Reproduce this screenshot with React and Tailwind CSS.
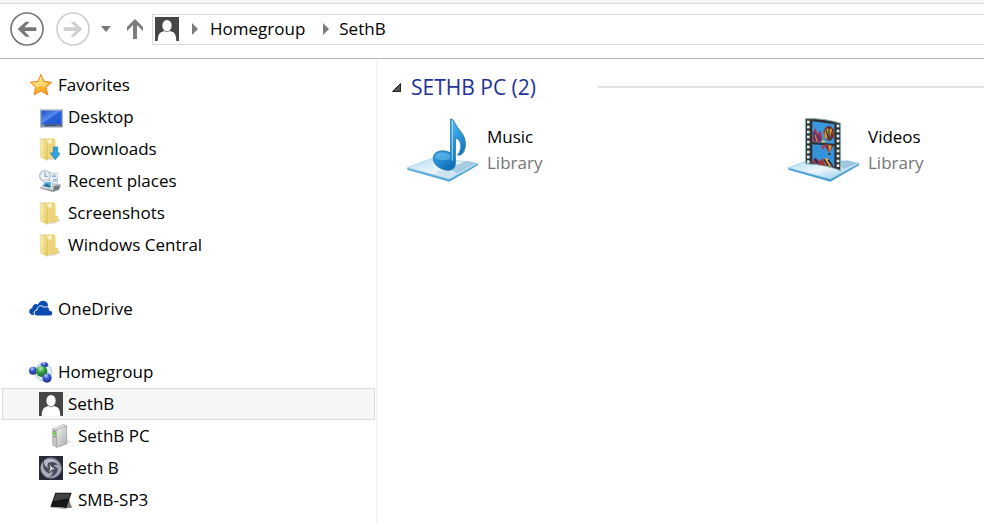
import React from "react";

function PersonIcon() {
  return (
    <svg viewBox="0 0 72 72" className="h-6 w-6 shrink-0" aria-hidden="true">
      <rect width="72" height="72" fill="#464646" />
      <path d="M8 72C9 58 11 50 18 46C24 43 29 43 30 39H42C43 43 49 43 55 46C61 50 63 58 64 72Z" fill="#fff" />
      <ellipse cx="36" cy="26" rx="15" ry="18" fill="#fff" stroke="#464646" strokeWidth="2" />
    </svg>
  );
}

function StarIcon() {
  return (
    <svg viewBox="0 0 72 72" className="h-6 w-6 shrink-0" aria-hidden="true">
      <defs>
        <linearGradient id="star" x1="0" y1="0" x2="0.6" y2="1">
          <stop offset="0" stopColor="#ffe89a" />
          <stop offset="0.5" stopColor="#ffc83c" />
          <stop offset="1" stopColor="#f79a1c" />
        </linearGradient>
      </defs>
      <path d="M36 4L45 25L68 28L51 43L57 66L36 54L15 66L20 43L4 28L27 25Z" fill="url(#star)" stroke="#e8892b" strokeWidth="3" strokeLinejoin="round" />
      <path d="M36 12L42 28L58 31L45 42L36 38L24 43L14 31L30 28Z" fill="#fff3b8" opacity="0.5" />
    </svg>
  );
}

function DesktopIcon() {
  return (
    <svg viewBox="0 0 72 72" className="h-6 w-6 shrink-0" aria-hidden="true">
      <defs>
        <linearGradient id="screen" x1="0" y1="0" x2="1" y2="1">
          <stop offset="0" stopColor="#1c4fc4" />
          <stop offset="0.45" stopColor="#5a8df0" />
          <stop offset="0.5" stopColor="#2c63dc" />
          <stop offset="1" stopColor="#1b56d2" />
        </linearGradient>
      </defs>
      <rect x="3" y="13" width="69" height="55" fill="#a9b4c6" />
      <rect x="7" y="17" width="61" height="41" fill="url(#screen)" />
      <rect x="7" y="58" width="61" height="6" fill="#3d4a63" />
      <rect x="7" y="58" width="9" height="6" fill="#7fa1c9" />
      <path d="M52 61H64" stroke="#8c96a8" strokeWidth="2" />
    </svg>
  );
}

function FolderIcon({ download = false }) {
  return (
    <svg viewBox="0 0 72 72" className="h-6 w-6 shrink-0" aria-hidden="true">
      <defs>
        <linearGradient id="folder" x1="0" y1="0" x2="1" y2="0.3">
          <stop offset="0" stopColor="#fdf3bd" />
          <stop offset="1" stopColor="#e8cb68" />
        </linearGradient>
      </defs>
      <path d="M45 46L66 57L44 68L22 68Z" fill="#c9c9c9" opacity="0.65" />
      <path d="M10 5L43 4Q49 4 49 9L50 44L56 48V60L47 65L22 62Z" fill="#ebd377" />
      <path d="M23 9L38 7V61L25 65Z" fill="#fdf6cf" />
      <path d="M4 4L24 13Q27 15 27 19V70L7 62Q4 60 4 57Z" fill="url(#folder)" stroke="#dcc068" strokeWidth="1.5" />
      <path d="M28 20L47 17L49 58L28 65Z" fill="#edd479" />
      <path d="M47 47L56 45V60L47 64Z" fill="#f3dc80" stroke="#d7bd5c" />
      {download && (
        <path d="M43 30H56V48H63L49 68L34 48H43Z" fill="#2ea2e3" stroke="#1679bd" strokeWidth="2" strokeLinejoin="round" />
      )}
    </svg>
  );
}

function RecentPlacesIcon() {
  return (
    <svg viewBox="0 0 72 72" className="h-6 w-6 shrink-0" aria-hidden="true">
      <path d="M2 58L20 40L66 47L60 63L42 69Z" fill="#8f9496" />
      <path d="M4 56L20 42L64 49L44 64Z" fill="#dcdfe1" />
      <path d="M25 10L55 13V46L25 42Z" fill="#f7fbfd" stroke="#a9bac5" strokeWidth="2" />
      <path d="M39 18H51M39 23H51M42 31H54M42 36H54" stroke="#7ba9cd" strokeWidth="3" />
      <circle cx="18" cy="21" r="16" fill="#e8f1f7" stroke="#b3c1cb" strokeWidth="4" />
      <path d="M18 10V22H26" fill="none" stroke="#8295a4" strokeWidth="3" />
      <path d="M16 33L42 36L38 60L10 55Z" fill="#fff" stroke="#a6b4bc" strokeWidth="2" />
      <path d="M18 38L37 40L34 55L14 51Z" fill="#56aae2" />
      <path d="M15 47L25 45L35 51L34 56L14 52Z" fill="#246f98" />
      <path d="M44 51L62 49L59 60L43 65Z" fill="#70767b" />
    </svg>
  );
}

function CloudIcon() {
  return (
    <svg viewBox="0 0 72 72" className="h-6 w-6 shrink-0" aria-hidden="true">
      <path d="M11 54C-3 52-2 35 10 34C9 24 20 18 27 23C32 7 54 8 57 24L55 37L24 54Z" fill="#0b4bb0" />
      <path d="M25 57C12 56 12 40 24 39C24 27 38 22 45 31C55 26 63 33 61 40C74 40 75 55 63 57Z" fill="#0b4bb0" stroke="#fff" strokeWidth="3" />
    </svg>
  );
}

function HomegroupIcon() {
  return (
    <svg viewBox="0 0 72 72" className="h-6 w-6 shrink-0" aria-hidden="true">
      <defs>
        <radialGradient id="blueBall" cx="0.4" cy="0.25" r="0.8">
          <stop offset="0" stopColor="#bdd0ff" />
          <stop offset="0.4" stopColor="#405bd0" />
          <stop offset="1" stopColor="#172783" />
        </radialGradient>
        <radialGradient id="greenBall" cx="0.4" cy="0.25" r="0.8">
          <stop offset="0" stopColor="#b5efb0" />
          <stop offset="0.45" stopColor="#35a344" />
          <stop offset="1" stopColor="#126126" />
        </radialGradient>
      </defs>
      <ellipse cx="43" cy="36" rx="25" ry="26" fill="#e6f1f8" stroke="#b9d3e4" strokeWidth="4" />
      <path d="M12 34L39 35L47 14M39 35L54 55" stroke="#93b6cf" strokeWidth="6" fill="none" />
      <ellipse cx="46" cy="14" rx="11" ry="8" fill="url(#blueBall)" />
      <circle cx="12" cy="32" r="12" fill="url(#blueBall)" />
      <circle cx="38" cy="34" r="17" fill="url(#greenBall)" />
      <circle cx="54" cy="54" r="14" fill="url(#blueBall)" />
    </svg>
  );
}

function ComputerIcon() {
  return (
    <svg viewBox="0 0 72 72" className="h-6 w-6 shrink-0" aria-hidden="true">
      <defs>
        <linearGradient id="tower" x1="0" y1="0" x2="1" y2="1">
          <stop offset="0" stopColor="#f3f3f3" />
          <stop offset="0.5" stopColor="#cfcfcf" />
          <stop offset="1" stopColor="#b2b2b2" />
        </linearGradient>
      </defs>
      <path d="M48 38L68 54L26 70Z" fill="#ddd" opacity="0.8" />
      <path d="M10 14L44 1L54 5V60L24 71L10 64Z" fill="#9a9a9a" />
      <path d="M12 14L43 3L51 6L23 16Z" fill="#e9e9e9" />
      <path d="M23 17L53 6V59L24 70Z" fill="url(#tower)" stroke="#999" />
      <path d="M11 15L22 18V69L11 63Z" fill="#c2c3c2" />
      <path d="M12 21L21 24M12 36L21 39" stroke="#626262" strokeWidth="2" />
      <path d="M12 24L21 27V33L12 30Z" fill="#58d222" />
    </svg>
  );
}

function SwirlIcon() {
  return (
    <svg viewBox="0 0 72 72" className="h-6 w-6 shrink-0" aria-hidden="true">
      <rect width="72" height="72" fill="#262a3b" />
      <circle cx="36" cy="36" r="31" fill="#4a4d5e" stroke="#8f8f9d" strokeWidth="2" />
      <path d="M16 14C33 0 58 10 65 32C53 18 40 15 30 20C24 23 24 31 29 36C18 32 12 23 16 14Z" fill="#b9b7c3" />
      <path d="M67 36C68 56 46 71 27 63C45 62 54 54 56 42C57 34 50 30 43 33C50 22 64 24 67 36Z" fill="#a5a3b2" />
      <path d="M23 63C5 53 1 31 12 18C10 34 16 44 26 50C32 53 38 49 39 42C44 54 35 66 23 63Z" fill="#afadbb" />
      <path d="M30 20L38 32L52 41L39 41L27 52L33 37Z" fill="#ececf0" stroke="#343849" strokeWidth="2" />
    </svg>
  );
}

function TabletIcon() {
  return (
    <svg viewBox="0 0 72 72" className="h-6 w-6 shrink-0" aria-hidden="true">
      <path d="M56 24L69 59L48 61Z" fill="#777" />
      <path d="M19 14H68L52 60L4 56Z" fill="#171717" />
      <path d="M21 17H64L59 31L13 39Z" fill="#454545" />
      <path d="M4 56L52 60V63L4 59Z" fill="#aaa" />
    </svg>
  );
}

function MusicLibraryIcon() {
  return (
    <svg viewBox="0 0 216 192" className="h-16 w-[72px] shrink-0" aria-hidden="true">
      <defs>
        <linearGradient id="musicBase" x1="0" y1="0" x2="1" y2="1">
          <stop offset="0" stopColor="#b5dcf0" />
          <stop offset="0.5" stopColor="#eaf5fb" />
          <stop offset="1" stopColor="#9fd2ee" />
        </linearGradient>
        <linearGradient id="note" x1="0" y1="0" x2="0.6" y2="1">
          <stop offset="0" stopColor="#8bd2f8" />
          <stop offset="0.5" stopColor="#36a3e5" />
          <stop offset="1" stopColor="#0867b4" />
        </linearGradient>
      </defs>
      <path d="M4 149L130 183L216 136V142L130 191L4 155Z" fill="#55a9d6" />
      <path d="M4 149L85 119L216 136L130 183Z" fill="url(#musicBase)" stroke="#8fc8e4" strokeWidth="2" />
      <path d="M126 151L182 128L212 136L153 166Z" fill="#80b4d1" opacity="0.6" />
      <path d="M96 158L131 160L145 174L130 182L91 171Z" fill="#cfe3ef" />
      <path d="M134 3Q139 1 145 12C151 31 181 49 178 82C176 101 168 114 155 111C171 91 167 65 148 59V137C147 151 138 157 125 157C101 155 81 138 82 119C83 98 113 93 134 105Z" fill="url(#note)" stroke="#287fae" strokeWidth="3" strokeLinejoin="round" />
      <path d="M139 8V128" stroke="#a3dcf7" strokeWidth="3" />
      <path d="M87 117C90 102 115 99 132 110V124C114 130 97 127 87 117Z" fill="#75c5ee" opacity="0.5" />
    </svg>
  );
}

const perforations = [8, 23, 38, 53, 68, 83, 98, 113, 127];

function Balloons() {
  return (
    <>
      <path d="M76 10L142 19V77L76 72Z" fill="#3998df" />
      <path d="M77 44L86 30L92 50L100 36L106 62L101 71H77Z" fill="#b52e36" />
      <path d="M80 42L87 69M91 48L99 69" stroke="#293ba3" strokeWidth="5" />
      <path d="M84 50L90 70" stroke="#e09a3a" strokeWidth="3" />
      <ellipse cx="126" cy="46" rx="16" ry="22" fill="#8b2630" />
      <path d="M114 34Q131 25 140 40L127 68L112 57Z" fill="#e49b28" />
      <path d="M116 31L125 67M126 25L126 67M138 34L128 67" stroke="#393b38" strokeWidth="4" />
      <path d="M106 66L118 72L104 74Z" fill="#e5cd3a" />
    </>
  );
}

function VideoLibraryIcon() {
  return (
    <svg viewBox="0 0 216 192" className="h-16 w-[72px] shrink-0" aria-hidden="true">
      <defs>
        <linearGradient id="videoBase" x1="0" y1="0" x2="1" y2="1">
          <stop offset="0" stopColor="#a5d4ee" />
          <stop offset="0.5" stopColor="#edf6fb" />
          <stop offset="1" stopColor="#83c2e7" />
        </linearGradient>
      </defs>
      <path d="M4 149L130 183L216 136V142L130 191L4 155Z" fill="#4a9fd1" />
      <path d="M4 149L85 119L216 136L130 183Z" fill="url(#videoBase)" stroke="#8fc8e4" strokeWidth="2" />
      <path d="M152 130L183 127L211 136L169 153Z" fill="#76acd0" opacity="0.6" />
      <path d="M55 2Q112 0 161 16V158Q115 139 56 137Z" fill="#303235" stroke="#8bb3b1" strokeWidth="3" />
      {perforations.map((y) => (
        <g key={y} fill="#e1f1ef">
          <rect x="60" y={y} width="8" height="8" />
          <rect x="149" y={y + 12} width="8" height="8" />
        </g>
      ))}
      <Balloons />
      <path d="M76 79L142 84V148L76 134Z" fill="#3593dc" />
      <path d="M109 79Q126 77 139 84L127 104Z" fill="#86333b" />
      <path d="M124 81L128 104L134 83" fill="#dd9e2d" />
      <path d="M123 105H130V111H123Z" fill="#4e392f" />
      <path d="M102 86L109 80L112 90L107 95Z" fill="#c53a36" />
      <path d="M77 130L86 118L96 130L103 122L118 140L113 143L77 134Z" fill="#a92f3c" />
      <path d="M108 124L120 119L139 142V147L115 141Z" fill="#e6a52e" />
      <path d="M82 122L94 136M110 124L123 143M124 126L138 146" stroke="#20285d" strokeWidth="5" />
    </svg>
  );
}

function Chevron() {
  return (
    <svg viewBox="0 0 6 12" className="h-3 w-1.5 shrink-0" aria-hidden="true">
      <path d="M0 0L6 6L0 12Z" fill="#7d7d7d" />
    </svg>
  );
}

function RoundArrow({ color, forward = false }) {
  return (
    <svg viewBox="0 0 102 102" className="block h-[34px] w-[34px]" aria-hidden="true">
      <circle cx="51" cy="51" r="48" fill="none" stroke={color} strokeWidth="5" />
      <g transform={forward ? "matrix(-1 0 0 1 102 0)" : undefined} fill={color}>
        <path d="M79 46H43L59 29H47L23 51L47 74H59L43 57H79Z" />
      </g>
    </svg>
  );
}

const groups = [
  {
    label: "Favorites",
    icon: <StarIcon />,
    space: "",
    items: [
      { label: "Desktop", icon: <DesktopIcon />, indent: "pl-[39px]" },
      { label: "Downloads", icon: <FolderIcon download />, indent: "pl-[39px]" },
      { label: "Recent places", icon: <RecentPlacesIcon />, indent: "pl-[39px]" },
      { label: "Screenshots", icon: <FolderIcon />, indent: "pl-[39px]" },
      { label: "Windows Central", icon: <FolderIcon />, indent: "pl-[39px]" },
    ],
  },
  { label: "OneDrive", icon: <CloudIcon />, space: "mt-8", items: [] },
  {
    label: "Homegroup",
    icon: <HomegroupIcon />,
    space: "mt-[31px]",
    items: [
      { label: "SethB", icon: <PersonIcon />, indent: "pl-9", selected: true },
      { label: "SethB PC", icon: <ComputerIcon />, indent: "pl-[49px]" },
      { label: "Seth B", icon: <SwirlIcon />, indent: "pl-[39px]" },
      { label: "SMB-SP3", icon: <TabletIcon />, indent: "pl-[49px]" },
    ],
  },
];

function TreeRow({ label, icon, indent, selected }) {
  const look = selected ? "ml-0.5 mr-px border border-[#dcdcdc] bg-[#f6f6f6]" : "";
  return (
    <a
      href="#"
      aria-current={selected ? "page" : undefined}
      className={`flex h-8 items-center gap-[5px] whitespace-nowrap ${indent} ${look}`}
    >
      {icon}
      <span>{label}</span>
    </a>
  );
}

const libraries = [
  { name: "Music", icon: <MusicLibraryIcon /> },
  { name: "Videos", icon: <VideoLibraryIcon /> },
];

export default function App() {
  return (
    <div className="flex min-h-screen flex-col overflow-x-hidden bg-white font-['Open_Sans','Noto_Sans',sans-serif] text-[17px] leading-6 text-black">
      <header className="border-b border-[#b4b4b4]">
        <div className="h-1 border-b border-[#d9dade] bg-[#f4f5f8]" />
        <div className="flex items-center pb-3 pl-[10px] pt-2">
          <button type="button" aria-label="Back">
            <RoundArrow color="#777777" />
          </button>
          <button type="button" aria-label="Forward" className="ml-3">
            <RoundArrow color="#d0d0d0" forward />
          </button>
          <button type="button" aria-label="Recent locations" className="ml-[11px]">
            <svg viewBox="0 0 10 6" className="block h-1.5 w-2.5" aria-hidden="true">
              <path d="M0 0H10L5 6Z" fill="#777" />
            </svg>
          </button>
          <button type="button" aria-label="Up" className="ml-4">
            <svg viewBox="0 0 16 20" className="block h-5 w-4" aria-hidden="true">
              <path d="M8 0L16 8V12L10 6V20H6V6L0 12V8Z" fill="#7c7c7c" />
            </svg>
          </button>
          <nav aria-label="Address" className="ml-[9px] flex h-[31px] flex-1 items-center border border-r-0 border-[#d9d9d9] pl-0.5">
            <PersonIcon />
            <span className="ml-[13px]"><Chevron /></span>
            <a href="#" className="ml-3">Homegroup</a>
            <span className="ml-[18px]"><Chevron /></span>
            <a href="#" className="ml-[10px]">SethB</a>
          </nav>
        </div>
      </header>

      <div className="flex flex-1">
        <nav aria-label="Folders" className="w-[378px] shrink-0 border-r-2 border-[#f5f5f5] pt-[10px]">
          {groups.map((group) => (
            <section key={group.label} className={group.space}>
              <TreeRow label={group.label} icon={group.icon} indent="pl-[29px]" />
              {group.items.map((item) => (
                <TreeRow key={item.label} {...item} />
              ))}
            </section>
          ))}
        </nav>

        <main className="min-w-0 flex-1 pl-3.5 pt-3">
          <div className="flex items-center">
            <button type="button" className="flex items-center gap-[10px]" aria-expanded="true">
              <svg viewBox="0 0 9 9" className="h-[9px] w-[9px]" aria-hidden="true">
                <path d="M8.500 0.500V8.500H0.500Z" fill="#555" stroke="#222" />
              </svg>
              <span className="text-[21px] leading-8 text-[#1e3399]">SETHB PC (2)</span>
            </button>
            <div className="ml-[62px] h-0.5 flex-1 bg-[#e2e2e2]" />
          </div>
          <ul className="ml-3.5 mt-[15px] grid grid-cols-[381px_1fr]">
            {libraries.map((library) => (
              <li key={library.name}>
                <a href="#" className="flex items-center gap-[9px]">
                  {library.icon}
                  <span className="flex flex-col leading-[26px]">
                    <span>{library.name}</span>
                    <span className="text-[#747474]">Library</span>
                  </span>
                </a>
              </li>
            ))}
          </ul>
        </main>
      </div>
    </div>
  );
}
